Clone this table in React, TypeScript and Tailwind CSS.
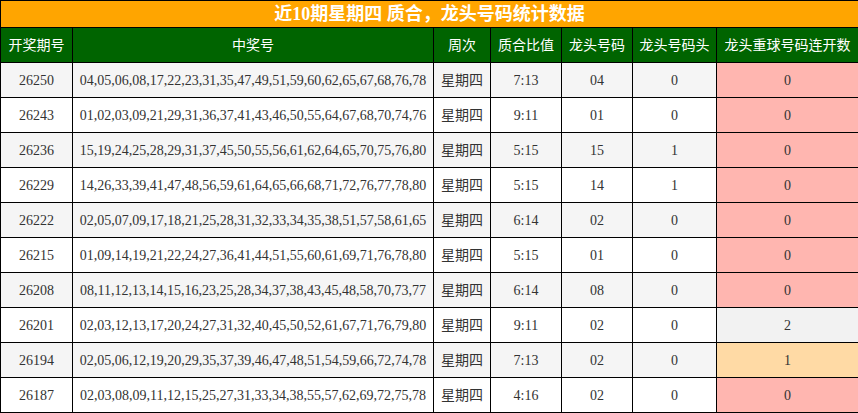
const rows = [
  { no: "26250", nums: "04,05,06,08,17,22,23,31,35,47,49,51,59,60,62,65,67,68,76,78", ratio: "7:13", head: "04", hh: "0", cont: "0" },
  { no: "26243", nums: "01,02,03,09,21,29,31,36,37,41,43,46,50,55,64,67,68,70,74,76", ratio: "9:11", head: "01", hh: "0", cont: "0" },
  { no: "26236", nums: "15,19,24,25,28,29,31,37,45,50,55,56,61,62,64,65,70,75,76,80", ratio: "5:15", head: "15", hh: "1", cont: "0" },
  { no: "26229", nums: "14,26,33,39,41,47,48,56,59,61,64,65,66,68,71,72,76,77,78,80", ratio: "5:15", head: "14", hh: "1", cont: "0" },
  { no: "26222", nums: "02,05,07,09,17,18,21,25,28,31,32,33,34,35,38,51,57,58,61,65", ratio: "6:14", head: "02", hh: "0", cont: "0" },
  { no: "26215", nums: "01,09,14,19,21,22,24,27,36,41,44,51,55,60,61,69,71,76,78,80", ratio: "5:15", head: "01", hh: "0", cont: "0" },
  { no: "26208", nums: "08,11,12,13,14,15,16,23,25,28,34,37,38,43,45,48,58,70,73,77", ratio: "6:14", head: "08", hh: "0", cont: "0" },
  { no: "26201", nums: "02,03,12,13,17,20,24,27,31,32,40,45,50,52,61,67,71,76,79,80", ratio: "9:11", head: "02", hh: "0", cont: "2" },
  { no: "26194", nums: "02,05,06,12,19,20,29,35,37,39,46,47,48,51,54,59,66,72,74,78", ratio: "7:13", head: "02", hh: "0", cont: "1" },
  { no: "26187", nums: "02,03,08,09,11,12,15,25,27,31,33,34,38,55,57,62,69,72,75,78", ratio: "4:16", head: "02", hh: "0", cont: "0" },
];

const contBg = (v: string) => {
  if (v === "0") return "bg-[#ffb6b0]";
  if (v === "1") return "bg-[#ffdaa5]";
  return "bg-[#f2f2f2]";
};

const headers = ["开奖期号", "中奖号", "周次", "质合比值", "龙头号码", "龙头号码头", "龙头重球号码连开数"];

export default function App() {
  return (
    <div className="w-[858px] bg-white font-['Liberation_Serif','Noto_Sans_CJK_SC',serif]">
      <table className="w-[858px] table-fixed border-collapse text-center">
        <colgroup>
          <col className="w-[72px]" />
          <col className="w-[361px]" />
          <col className="w-[57px]" />
          <col className="w-[71px]" />
          <col className="w-[71px]" />
          <col className="w-[84px]" />
          <col className="w-[142px]" />
        </colgroup>
        <thead>
          <tr className="h-[27px]">
            <th colSpan={7} className="border border-black bg-[#ffa500] p-0 text-[18px] font-bold leading-none text-white">
              近10期星期四 质合，龙头号码统计数据
            </th>
          </tr>
          <tr className="h-[35px]">
            {headers.map((h) => (
              <th key={h} className="border border-black bg-[#006400] p-0 text-[14px] font-normal text-white">
                {h}
              </th>
            ))}
          </tr>
        </thead>
        <tbody className="text-[14px] text-[#333]">
          {rows.map((r, i) => {
            const bg = i % 2 === 0 ? "bg-[#f5f5f5]" : "bg-white";
            return (
              <tr key={r.no} className={`h-[35px] ${bg}`}>
                <td className="border border-black p-0">{r.no}</td>
                <td className="border border-black p-0">{r.nums}</td>
                <td className="border border-black p-0">星期四</td>
                <td className="border border-black p-0">{r.ratio}</td>
                <td className="border border-black p-0">{r.head}</td>
                <td className="border border-black p-0">{r.hh}</td>
                <td className={`border border-black p-0 ${contBg(r.cont)}`}>{r.cont}</td>
              </tr>
            );
          })}
        </tbody>
      </table>
    </div>
  );
}
